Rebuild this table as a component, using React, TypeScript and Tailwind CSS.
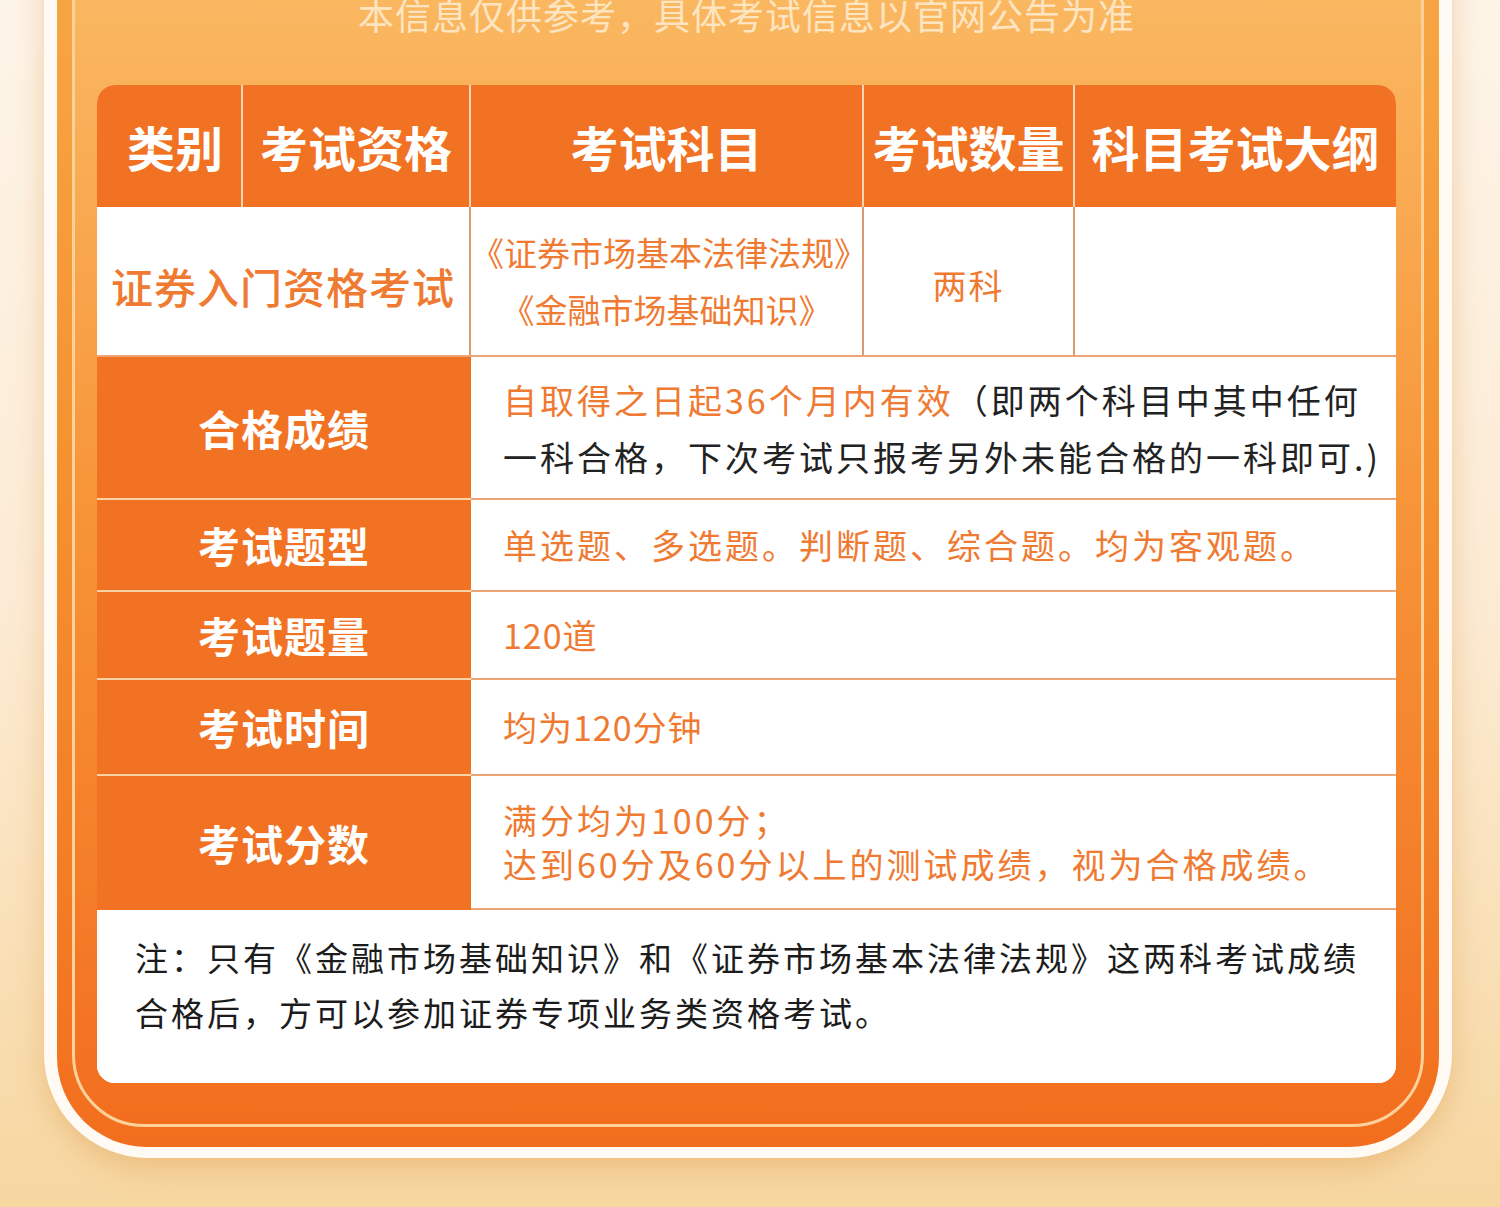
const headers = [
  { label: '类别', w: 'w-[146px]', pad: 'pl-[12px]' },
  { label: '考试资格', w: 'w-[228px]', pad: '' },
  { label: '考试科目', w: 'w-[393px]', pad: '' },
  { label: '考试数量', w: 'w-[211px]', pad: '' },
  { label: '科目考试大纲', w: 'flex-1', pad: '' },
]

function HeaderRow() {
  return (
    <div className="flex h-[122px] bg-[#f27223]">
      {headers.map((h, i) => (
        <div
          key={h.label}
          className={`${h.w} ${h.pad} flex items-center justify-center ${
            i < headers.length - 1 ? 'border-r-2 border-[#fbd3b4]' : ''
          }`}
        >
          <span className="text-[48px] font-semibold leading-none text-white">{h.label}</span>
        </div>
      ))}
    </div>
  )
}

function LabelRow({
  label,
  height,
  last,
  children,
}: {
  label: string
  height: string
  last?: boolean
  children: React.ReactNode
}) {
  return (
    <div className={`flex ${height}`}>
      <div
        className={`flex w-[374px] shrink-0 items-center justify-center bg-[#f27223] ${
          last ? '' : 'border-b-2 border-[#fcd1a6]'
        }`}
      >
        <span className="text-[42px] font-semibold leading-none tracking-[1px] text-white">{label}</span>
      </div>
      <div className="flex flex-1 items-center border-b-2 border-[#eda677] bg-white pl-[32px]">
        {children}
      </div>
    </div>
  )
}

export default function App() {
  return (
    <div className="h-[1207px] w-[1500px] overflow-hidden bg-gradient-to-b from-[#fdf4e8] via-[#fcebd4] to-[#f7d7a0] pl-[44px] font-['Noto_Sans_CJK_SC',sans-serif]">
      <div className="mt-[-160px] w-[1408px] rounded-[104px] bg-[#fffaf3] px-[13px] pt-[13px] pb-[11px] shadow-[0_10px_28px_rgba(214,140,60,0.35)]">
        <div className="rounded-[90px] bg-gradient-to-b from-[#f7ab48] via-[#f5902e] to-[#f26e1e] px-[15px] pt-[15px] pb-[20px]">
          <div className="rounded-[72px] border-[3px] border-[#fcd29a] bg-gradient-to-b from-[#fac06a] via-[#f79538] to-[#f26e1e] pt-[125px] pr-[25px] pb-[41px] pl-[22px]">
            <p className="mb-[53px] text-center text-[36px] leading-[36px] tracking-[1px] text-[#fff1da]/80">
              本信息仅供参考，具体考试信息以官网公告为准
            </p>

            <div className="overflow-hidden rounded-[18px] bg-white">
              <HeaderRow />

              <div className="flex h-[150px] border-b-2 border-[#eca478] bg-white">
                <div className="flex w-[374px] items-center justify-center border-r-2 border-[#d99a70] pt-[10px]">
                  <span className="text-[42px] font-medium leading-none tracking-[1px] text-[#ef7a32]">
                    证券入门资格考试
                  </span>
                </div>
                <div className="flex w-[393px] flex-col items-center justify-center border-r-2 border-[#d99a70] text-[33px] leading-[57px] text-[#ef7a32]">
                  <span>《证券市场基本法律法规》</span>
                  <span>《金融市场基础知识》</span>
                </div>
                <div className="flex w-[211px] items-center justify-center border-r-2 border-[#d99a70] pt-[8px]">
                  <span className="text-[34px] leading-none tracking-[2px] text-[#ef7a32]">两科</span>
                </div>
                <div className="flex-1" />
              </div>

              <LabelRow label="合格成绩" height="h-[143px]">
                <p className="text-[34px] leading-[57px] tracking-[3px] text-[#222]">
                  <span className="text-[#ef7a32]">自取得之日起36个月内有效</span>（即两个科目中其中任何
                  <br />
                  一科合格，下次考试只报考另外未能合格的一科即可.)
                </p>
              </LabelRow>

              <LabelRow label="考试题型" height="h-[92px]">
                <p className="text-[34px] leading-none tracking-[3px] text-[#ef7a32]">
                  单选题、多选题。判断题、综合题。均为客观题。
                </p>
              </LabelRow>

              <LabelRow label="考试题量" height="h-[88px]">
                <p className="text-[34px] leading-none tracking-[1px] text-[#ef7a32]">120道</p>
              </LabelRow>

              <LabelRow label="考试时间" height="h-[96px]">
                <p className="text-[34px] leading-none tracking-[1px] text-[#ef7a32]">均为120分钟</p>
              </LabelRow>

              <LabelRow label="考试分数" height="h-[134px]" last>
                <p className="text-[34px] leading-[44px] tracking-[3px] text-[#ef7a32]">
                  满分均为100分；
                  <br />
                  达到60分及60分以上的测试成绩，视为合格成绩。
                </p>
              </LabelRow>

              <div className="h-[173px] bg-white pt-[20px] pl-[38px]">
                <p className="text-[33px] leading-[55px] tracking-[3px] text-[#1c1c1c]">
                  注：只有《金融市场基础知识》和《证券市场基本法律法规》这两科考试成绩
                  <br />
                  合格后，方可以参加证券专项业务类资格考试。
                </p>
              </div>
            </div>
          </div>
        </div>
      </div>
    </div>
  )
}
